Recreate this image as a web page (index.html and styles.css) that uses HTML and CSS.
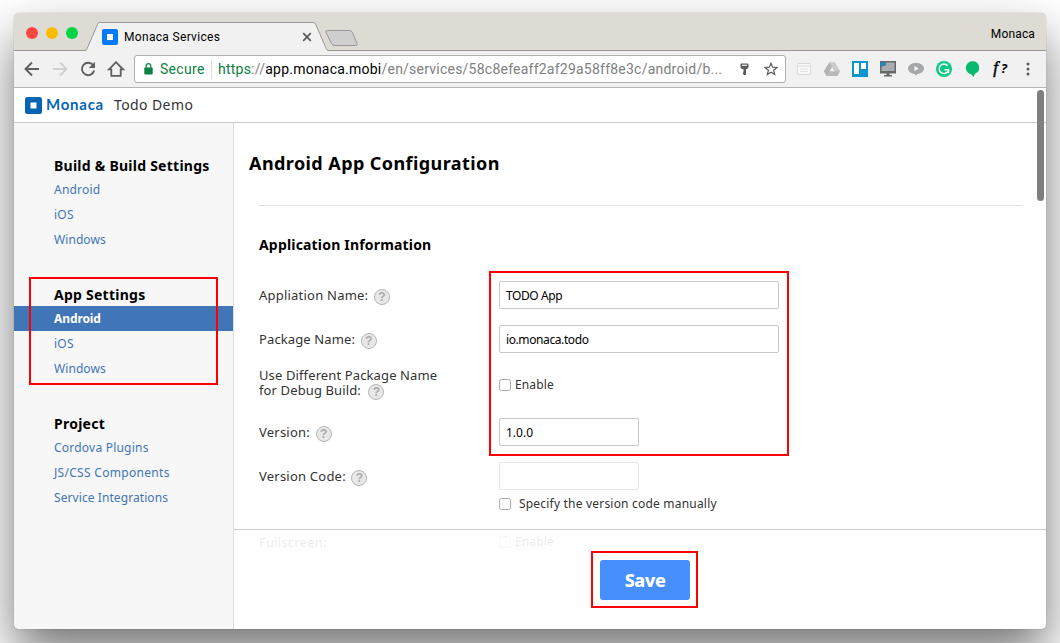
FILE: index.html
```html
<!DOCTYPE html>
<html lang="en">
<head>
<meta charset="utf-8">
<title>Monaca Services</title>
<link rel="stylesheet" href="styles.css">
</head>
<body>
<div class="window">
  <div class="tabbar">
    <svg class="tab-shape" width="345" height="38" viewBox="0 0 345 38">
      <path d="M72 38 L74 33.500 L83.500 11.500 C84.300 10 84.500 9.500 86 9.500 H299 C300.500 9.500 301 10 302 12 L311.500 34 C312.500 36.500 313 37.500 315 38 Z" fill="#f1f1f1"/>
      <path d="M0 37.500 H71 C72.500 37.500 72.800 36 74 33.500 L83.500 11.500 C84.300 10 84.500 9.500 86 9.500 H299 C300.500 9.500 301 10 302 12 L311.500 34 C312.500 36.500 313 37.500 315 37.500 H345" fill="none" stroke="#999794"/>
      <path d="M313.500 17.500 H335 Q337.500 17.500 338.500 19.500 L343 30.500 Q344 32.500 341.500 32.500 H321 Q318.500 32.500 317.500 30.500 L312 19.500 Q311.500 17.500 313.500 17.500Z" fill="#cfcfcf" stroke="#999794"/>
      <circle cx="18" cy="20" r="6" fill="#fc4642"/>
      <circle cx="38" cy="20" r="6" fill="#fdbc02"/>
      <circle cx="58" cy="20" r="6" fill="#02d444"/>
    </svg>
    <div class="tab">
      <svg width="16" height="16" viewBox="0 0 16 16"><rect width="16" height="16" rx="2" fill="#007aff"/><rect x="5" y="5" width="6" height="6" fill="#fff"/></svg>
      <span class="tab-title">Monaca Services</span>
      <svg width="10" height="10" viewBox="0 0 10 10"><path d="M1.200 1.200 8.800 8.800M8.800 1.200 1.200 8.800" stroke="#5a5a5a" stroke-width="1.700"/></svg>
    </div>
    <span class="profile">Monaca</span>
  </div>

  <div class="toolbar">
    <div class="nav">
      <svg width="16" height="16" viewBox="0 0 16 16" fill="none" stroke="#5f5f5f" stroke-width="1.900"><path d="M15 8H2M8 1.500 1.500 8 8 14.500"/></svg>
      <svg width="16" height="16" viewBox="0 0 16 16" fill="none" stroke="#d0d0d0" stroke-width="1.900"><path d="M1 8H14M8 1.500 14.500 8 8 14.500"/></svg>
      <svg width="16" height="16" viewBox="0 0 16 16"><path d="M13.200 4.300A6.200 6.200 0 1 0 14.200 9.500" fill="none" stroke="#5f5f5f" stroke-width="1.900"/><path d="M15 .8V7H8.800Z" fill="#5f5f5f"/></svg>
      <svg class="home" width="18" height="16" viewBox="0 0 18 16"><path d="M2 8.300 9 1.200 16 8.300H13.700V14.800H4.300V8.300Z" fill="none" stroke="#5f5f5f" stroke-width="1.800"/></svg>
    </div>
    <div class="omnibox">
      <svg width="9" height="12" viewBox="0 0 9 12"><rect x=".3" y="4.500" width="8.400" height="7" rx=".8" fill="#0b8043"/><path d="M2.200 5V3a2.300 2.300 0 0 1 4.600 0v2" fill="none" stroke="#0b8043" stroke-width="1.200"/></svg>
      <span class="secure">Secure</span>
      <span class="url"><span class="scheme">https</span>://<span class="host">app.monaca.mobi</span>/en/services/58c8efeaff2af29a58ff8e3c/android/b...</span>
      <svg class="key" width="9" height="13" viewBox="0 0 9 13"><path d="M.5 1.500Q.5.500 1.500.500H7.500Q8.500.500 8.500 1.500V4Q8.500 6 6 6.200V12H3.500V11H2.800V9.600H3.500V6.200Q.5 6 .5 4Z" fill="#5a5a5a"/><rect x="2" y="1.700" width="5" height="1.100" fill="#fff"/></svg>
      <svg width="14" height="14" viewBox="0 0 14 14"><path d="M7 1.200 8.600 5.200 13 5.500 9.600 8.300 10.700 12.500 7 10.200 3.300 12.500 4.400 8.300 1 5.500 5.400 5.200Z" fill="none" stroke="#5a5a5a" stroke-width="1.200"/></svg>
    </div>
    <div class="extensions">
      <svg width="16" height="16" viewBox="0 0 16 16"><rect x="1.500" y="2.500" width="13" height="11" rx="1" fill="#f8f8f8" stroke="#d9d9d9"/><path d="M2 5H14" stroke="#d9d9d9"/><path d="M4 8H12M4 10.500H12" stroke="#e2e2e2"/></svg>
      <svg width="16" height="16" viewBox="0 0 16 16"><path d="M5.300 1.500H10.700L16 10.300 13.500 15H2.500L0 10.300Z" fill="#b9b9b9"/><path d="M5.300 1.500 8 6 2.500 15 0 10.300Z" fill="#b4b4b4"/><path d="M5.300 1.500H10.700L16 10.300H10.500Z" fill="#cbcbcb"/><path d="M8 6 10.500 10.300H5.500Z" fill="#f1f1f1"/></svg>
      <svg width="16" height="16" viewBox="0 0 16 16"><path d="M0 0H16V16H0Z" fill="#0796d2"/><path d="M2 2H7V13H2ZM9 2H14V8H9Z" fill="#fff"/></svg>
      <svg width="16" height="16" viewBox="0 0 16 16"><rect width="16" height="12.500" fill="#686868"/><rect x="1.500" y="1.500" width="13" height="8.500" fill="#a9adb0"/><path d="M0 0H6V4L4 5 0 6Z" fill="#686868"/><path d="M1 1H5.500V4.500H3.500L1 6Z" fill="#168ccd"/><path d="M6.500 12H9.500V14H12V15.500H4V14H6.500Z" fill="#686868"/></svg>
      <svg width="16" height="16" viewBox="0 0 16 16"><ellipse cx="8" cy="7.500" rx="8" ry="5.700" fill="#a5a7a8"/><path d="M6 12H10L8 14.700Z" fill="#a5a7a8"/><path d="M6.500 5 10.500 7.500 6.500 10Z" fill="#fff"/></svg>
      <svg width="16" height="16" viewBox="0 0 16 16"><circle cx="8" cy="8" r="8" fill="#0bcb82"/><path d="M11.700 4.800A4.800 4.800 0 1 0 12.500 9.200M8.500 8.700H12.500V12" fill="none" stroke="#fff" stroke-width="1.500"/></svg>
      <svg width="14" height="16" viewBox="0 0 14 16"><path d="M7 .3A6.700 6.500 0 0 1 10 12.800L8.500 16 6.500 13.400A6.700 6.600 0 0 1 7 .3Z" fill="#09b96c"/></svg>
      <span class="fq"><i>f</i><b>?</b></span>
      <svg width="4" height="14" viewBox="0 0 4 14" fill="#5a5a5a"><circle cx="2" cy="2" r="1.500"/><circle cx="2" cy="7" r="1.500"/><circle cx="2" cy="12" r="1.500"/></svg>
    </div>
  </div>

  <div class="page-header">
    <svg width="17" height="17" viewBox="0 0 17 17"><rect width="17" height="17" rx="2.500" fill="#0565b3"/><rect x="5.500" y="5.500" width="6" height="6" fill="#fff"/></svg>
    <span class="brand">Monaca</span>
    <span class="project">Todo Demo</span>
  </div>

  <div class="body">
    <nav class="sidebar">
      <section class="group"><h3>Build &amp; Build Settings</h3><a>Android</a><a>iOS</a><a class="tight">Windows</a></section>
      <section class="group"><h3>App Settings</h3><a class="active">Android</a><a>iOS</a><a class="tight">Windows</a></section>
      <section class="group"><h3>Project</h3><a>Cordova Plugins</a><a class="wide-link">JS/CSS Components</a><a class="tight">Service Integrations</a></section>
    </nav>
    <main class="content">
      <h1>Android App Configuration</h1>
      <h2>Application Information</h2>
      <div class="row"><label class="loose">Appliation Name: <i class="help">?</i></label><div class="input">TODO App</div></div>
      <div class="row"><label>Package Name: <i class="help">?</i></label><div class="input">io.monaca.todo</div></div>
      <div class="row tall"><label>Use Different Package Name<br>for Debug Build: <i class="help">?</i></label><div class="check"><i class="box"></i><span>Enable</span></div></div>
      <div class="row"><label class="loose">Version: <i class="help">?</i></label><div class="input short">1.0.0</div></div>
      <div class="row"><label class="loose">Version Code: <i class="help">?</i></label><div class="input short disabled"></div></div>
      <div class="row manual"><div class="check wide"><i class="box"></i><span>Specify the version code manually</span></div></div>
      <div class="row full"><label class="loose">Fullscreen:</label><div class="check"><i class="box"></i><span>Enable</span></div></div>
      <div class="footer"><div class="save">Save</div></div>
    </main>
  </div>
  <div class="thumb"></div>
</div>
<div class="mark mark-menu"></div>
<div class="mark mark-form"></div>
<div class="mark mark-save"></div>
</body>
</html>
```
FILE: styles.css
```css
* { box-sizing: border-box; }
body { margin: 0; width: 1060px; height: 643px; padding: 13px 14px; overflow: hidden; background: #fff; font-family: "Noto Sans", sans-serif; color: #333; }
svg { display: block; flex: none; }
.window { position: relative; width: 1032px; height: 616px; border-radius: 5px; background: #fff; overflow: hidden; box-shadow: 0 0 1px rgba(0,0,0,.5), 0 25px 50px rgba(0,0,0,.54); }

.tabbar { position: relative; height: 38px; display: flex; justify-content: space-between; background: #dedbd5; border-bottom: 1px solid #999794; font: 12px/16px Roboto, sans-serif; color: #000; }
.tab-shape { position: absolute; left: 0; top: 0; }
.tab { position: relative; margin: 16px 0 0 88px; height: 16px; display: flex; align-items: center; width: 210px; }
.tab-title { margin-left: 6px; flex: 1; font-size: 12px; letter-spacing: .32px; white-space: nowrap; }
.profile { margin: 13px 11px 0 0; letter-spacing: .15px; }

.toolbar { height: 37px; display: flex; align-items: center; background: #f1f1f1; border-bottom: 1px solid #b6b4b6; }
.nav { display: flex; gap: 12px; width: 120px; padding-left: 10px; flex: none; }
.home { margin-left: -1px; }
.omnibox { width: 652px; height: 28px; border: 1px solid #b0b0b0; border-radius: 3px; background: #fff; display: flex; align-items: center; padding-left: 9px; font: 14px/18px Roboto, sans-serif; color: #808080; white-space: nowrap; }
.secure { margin-left: 7px; width: 52px; height: 20px; line-height: 20px; border-right: 1px solid #ddd; color: #0b8043; letter-spacing: .3px; }
.url { margin-left: 6px; width: 522px; letter-spacing: .23px; }
.scheme { color: #0b8043; }
.host { color: #000; }
.key { margin-right: 15px; }
.extensions { display: grid; grid-template-columns: repeat(9, 28px); align-items: center; justify-items: center; margin-left: 4px; }
.fq { font: 17px/18px "Liberation Serif", serif; color: #000; white-space: nowrap; margin-top: -2px; }
.fq i { -webkit-text-stroke: .5px #000; margin-right: 3px; }
.fq b { font: bold italic 13px/18px "Noto Sans", sans-serif; }

.page-header { height: 35px; display: flex; align-items: center; padding-left: 11px; border-bottom: 1px solid #ccc; background: #fff; }
.brand { margin: -2px 0 0 4px; width: 68px; font: bold 15px/20px Lato, sans-serif; color: #0565b3; letter-spacing: .75px; }
.project { font-size: 14px; line-height: 20px; letter-spacing: .4px; }

.body { display: flex; height: 506px; }
.sidebar { width: 220px; flex: none; background: #f7f7f7; border-right: 1px solid #ddd; padding-top: 32px; }
.group { margin-bottom: 32px; }
.group h3 { margin: 0; padding-left: 40px; height: 22px; font-size: 14px; line-height: 22px; font-weight: bold; color: #000; white-space: nowrap; letter-spacing: .25px; }
.group a { display: block; height: 25px; padding-left: 40px; font-size: 12px; line-height: 25px; color: #4076b8; letter-spacing: .22px; }
.group a.tight { letter-spacing: .08px; }
.group a.wide-link { letter-spacing: .3px; }
.group a.active { background: #4076b8; color: #fff; font-weight: bold; width: 219px; letter-spacing: -.1px; }

.content { position: relative; flex: 1; }
h1 { margin: 0 24px 0 15px; height: 83px; padding-top: 28px; font-size: 18px; line-height: 24px; color: #000; letter-spacing: .42px; background: linear-gradient(#e0e0e0, #e0e0e0) 10px 100% / 100% 1px no-repeat; }
h2 { margin: 0 0 0 25px; height: 67px; padding-top: 29px; font-size: 14px; line-height: 20px; color: #000; letter-spacing: .18px; }
.row { height: 44px; margin-left: 25px; display: grid; grid-template-columns: 240px 1fr; align-items: center; font-size: 13px; line-height: 15px; white-space: nowrap; letter-spacing: .12px; }
.row .loose { letter-spacing: .22px; }
.row.tall { height: 49px; padding-bottom: 1px; }
.row.tall label { padding: 0 0 5px; }
.row.tall .help { margin-left: 4px; }
.row.manual { height: 12px; grid-template-columns: 1fr; padding-left: 240px; line-height: 12px; }
.row.full { height: 64px; }
.help { display: inline-block; width: 16px; height: 16px; margin: -4px 0 -4px 2px; border: 1px solid #b5b5b5; border-radius: 50%; background: #e8e8e8; color: #aaa; font: bold 12px/14px "Liberation Sans", sans-serif; text-align: center; vertical-align: -1px; letter-spacing: 0; }
.input { width: 280px; height: 28px; border: 1px solid #c8c8c8; border-radius: 2px; padding-left: 6px; font-size: 12px; line-height: 27px; color: #000; letter-spacing: -.4px; }
.input.short { width: 140px; letter-spacing: 0; }
.input.disabled { border-color: #e6e6e6; }
.check { display: flex; align-items: center; gap: 4px; font-size: 12px; letter-spacing: .12px; }
.check span { margin-top: -1px; }
.check.wide { gap: 8px; letter-spacing: .2px; }
.box { width: 12px; height: 12px; border: 1px solid #a8a8a8; border-radius: 2.500px; background: #fff; }
.footer { position: absolute; left: 0; right: 0; bottom: 0; height: 100px; border-top: 1px solid #ccc; background: rgba(255,255,255,.9); display: flex; justify-content: center; padding: 30px 0 0 10px; }
.save { width: 90px; height: 40px; border-radius: 3px; background: #478fff; color: #fff; font: 800 18px/40px "Noto Sans", sans-serif; text-align: center; letter-spacing: -.5px; }
.thumb { position: absolute; left: 1023px; top: 77px; width: 7px; height: 111px; border-radius: 4px; background: #7f7f7f; }

.mark { position: absolute; border: 2px solid #f00; }
.mark-menu { left: 29px; top: 277px; width: 189px; height: 108px; }
.mark-form { left: 489px; top: 271px; width: 300px; height: 185px; }
.mark-save { left: 591px; top: 551px; width: 107px; height: 57px; }
```
